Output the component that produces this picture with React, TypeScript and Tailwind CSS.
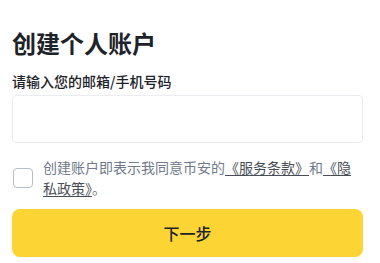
export default function App() {
  return (
    <div
      className="w-[375px] bg-white px-3 pt-[27px]"
      style={{ fontFamily: '"Noto Sans CJK SC", "Noto Sans", sans-serif' }}
    >
      <h1 className="text-[24px] leading-8 font-semibold text-[#1e2329]">创建个人账户</h1>

      <label className="mt-3 block text-[14px] leading-5 font-medium text-[#1e2329]">
        请输入您的邮箱/手机号码
      </label>
      <input
        type="text"
        className="mt-1 block h-12 w-full rounded-[4px] border border-[#eaecef] px-3 text-[14px] outline-none"
      />

      <div className="mt-[14px] flex items-center gap-[10px]">
        <div className="ml-px h-5 w-5 shrink-0 rounded-[4px] border border-[#b7bdc6] bg-white" />
        <p className="text-[14px] leading-[21px] text-[#707a8a]">
          创建账户即表示我同意币安的
          <a className="text-[#474d57] underline underline-offset-2">《服务条款》</a>
          和
          <a className="text-[#474d57] underline underline-offset-2">《隐私政策》</a>
          。
        </p>
      </div>

      <button className="mt-[10px] flex h-12 w-full items-center justify-center rounded-lg bg-[#fcd535] text-[16px] font-medium text-[#1e2329]">
        下一步
      </button>
    </div>
  );
}
